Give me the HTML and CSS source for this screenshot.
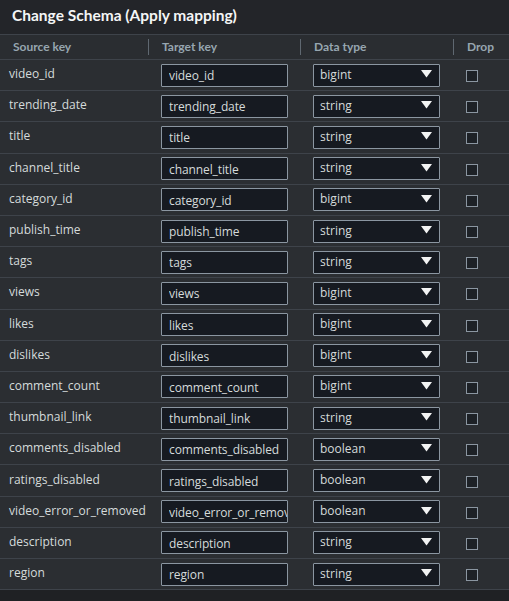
FILE: index.html
```html
<!DOCTYPE html>
<html>
<head>
<meta charset="utf-8">
<link rel="stylesheet" href="styles.css">
</head>
<body>
<div class="panel">
  <div class="title">Change Schema (Apply mapping)</div>
  <div class="table">
    <div class="head">
      <div class="hc first">Source key</div>
      <div class="hc sep">Target key</div>
      <div class="hc sep">Data type</div>
      <div class="hc sep">Drop</div>
    </div>
    <div id="rows"></div>
  </div>
</div>
<script src="app.js"></script>
</body>
</html>
```
FILE: styles.css
```css
* { box-sizing: border-box; }
body {
  margin: 0;
  background: #1f2124;
  font-family: "Open Sans", "Noto Sans", sans-serif;
  width: 509px;
  height: 601px;
  overflow: hidden;
}
.panel { width: 509px; }
.title {
  height: 35px;
  background: #232529;
  color: #f4f6f6;
  font-family: Lato, "Open Sans", sans-serif;
  font-weight: 700;
  font-size: 15.5px;
  padding: 6px 0 0 12px;
  border-bottom: 1px solid #3e434a;
}
.head {
  display: grid;
  grid-template-columns: 148px 152px 153px 1fr;
  height: 25px;
  background: #2a2d31;
  border-bottom: 1px solid #3e434a;
  align-items: center;
}
.hc {
  color: #97a6b0;
  font-family: Lato, "Open Sans", sans-serif;
  font-weight: 700;
  font-size: 12px;
  padding-left: 13px;
  height: 16px;
  line-height: 16px;
}
.hc.sep {
  border-left: 1px solid #5f6871;
}
.row {
  display: grid;
  grid-template-columns: 148px 152px 153px 1fr;
  height: 31.2px;
  background: #2b2e32;
  border-bottom: 1px solid #3e434a;
  align-items: center;
}
.src {
  color: #d5dbdb;
  font-size: 12px;
  padding-left: 9px;
  padding-bottom: 3px;
}
.inp {
  display: block;
  margin: 0 0 0 13px;
  width: 127px;
  height: 23px;
  background: #161a21;
  border: 1px solid #8b96a1;
  border-radius: 1px;
  color: #d5dbdb;
  font-family: "Open Sans", "Noto Sans", sans-serif;
  font-size: 12px;
  letter-spacing: -0.1px;
  padding: 1px 0 0 7px;
  outline: none;
}
.sel {
  margin-left: 13px;
  width: 127px;
  height: 23px;
  background: #161a21;
  border: 1px solid #8b96a1;
  border-radius: 1px;
  color: #d5dbdb;
  font-size: 12px;
  padding: 0 0 0 6px;
  display: flex;
  align-items: center;
  justify-content: space-between;
}
.sel span { padding-bottom: 2px; }
.arrow {
  width: 26px;
  display: flex;
  justify-content: center;
}
.chk-cell { padding-left: 13px; }
.chk {
  width: 12px;
  height: 12px;
  border: 1px solid #8b96a1;
  background: #1d2126;
  margin-top: 2px;
}
```
FILE: app.js
```js
var data = [
  ["video_id","bigint"],["trending_date","string"],["title","string"],
  ["channel_title","string"],["category_id","bigint"],["publish_time","string"],
  ["tags","string"],["views","bigint"],["likes","bigint"],["dislikes","bigint"],
  ["comment_count","bigint"],["thumbnail_link","string"],["comments_disabled","boolean"],
  ["ratings_disabled","boolean"],["video_error_or_removed","boolean"],
  ["description","string"],["region","string"]
];
var rows = document.getElementById("rows");
data.forEach(function (d) {
  var r = document.createElement("div");
  r.className = "row";
  r.innerHTML =
    '<div class="src">' + d[0] + '</div>' +
    '<div><input class="inp" type="text" readonly value="' + d[0] + '"></div>' +
    '<div><div class="sel"><span>' + d[1] + '</span><span class="arrow"><svg width="11" height="8" viewBox="0 0 11 8"><path d="M0 0H11L5.5 7.5Z" fill="#f2f3f3"/></svg></span></div></div>' +
    '<div class="chk-cell"><div class="chk"></div></div>';
  rows.appendChild(r);
});
```
